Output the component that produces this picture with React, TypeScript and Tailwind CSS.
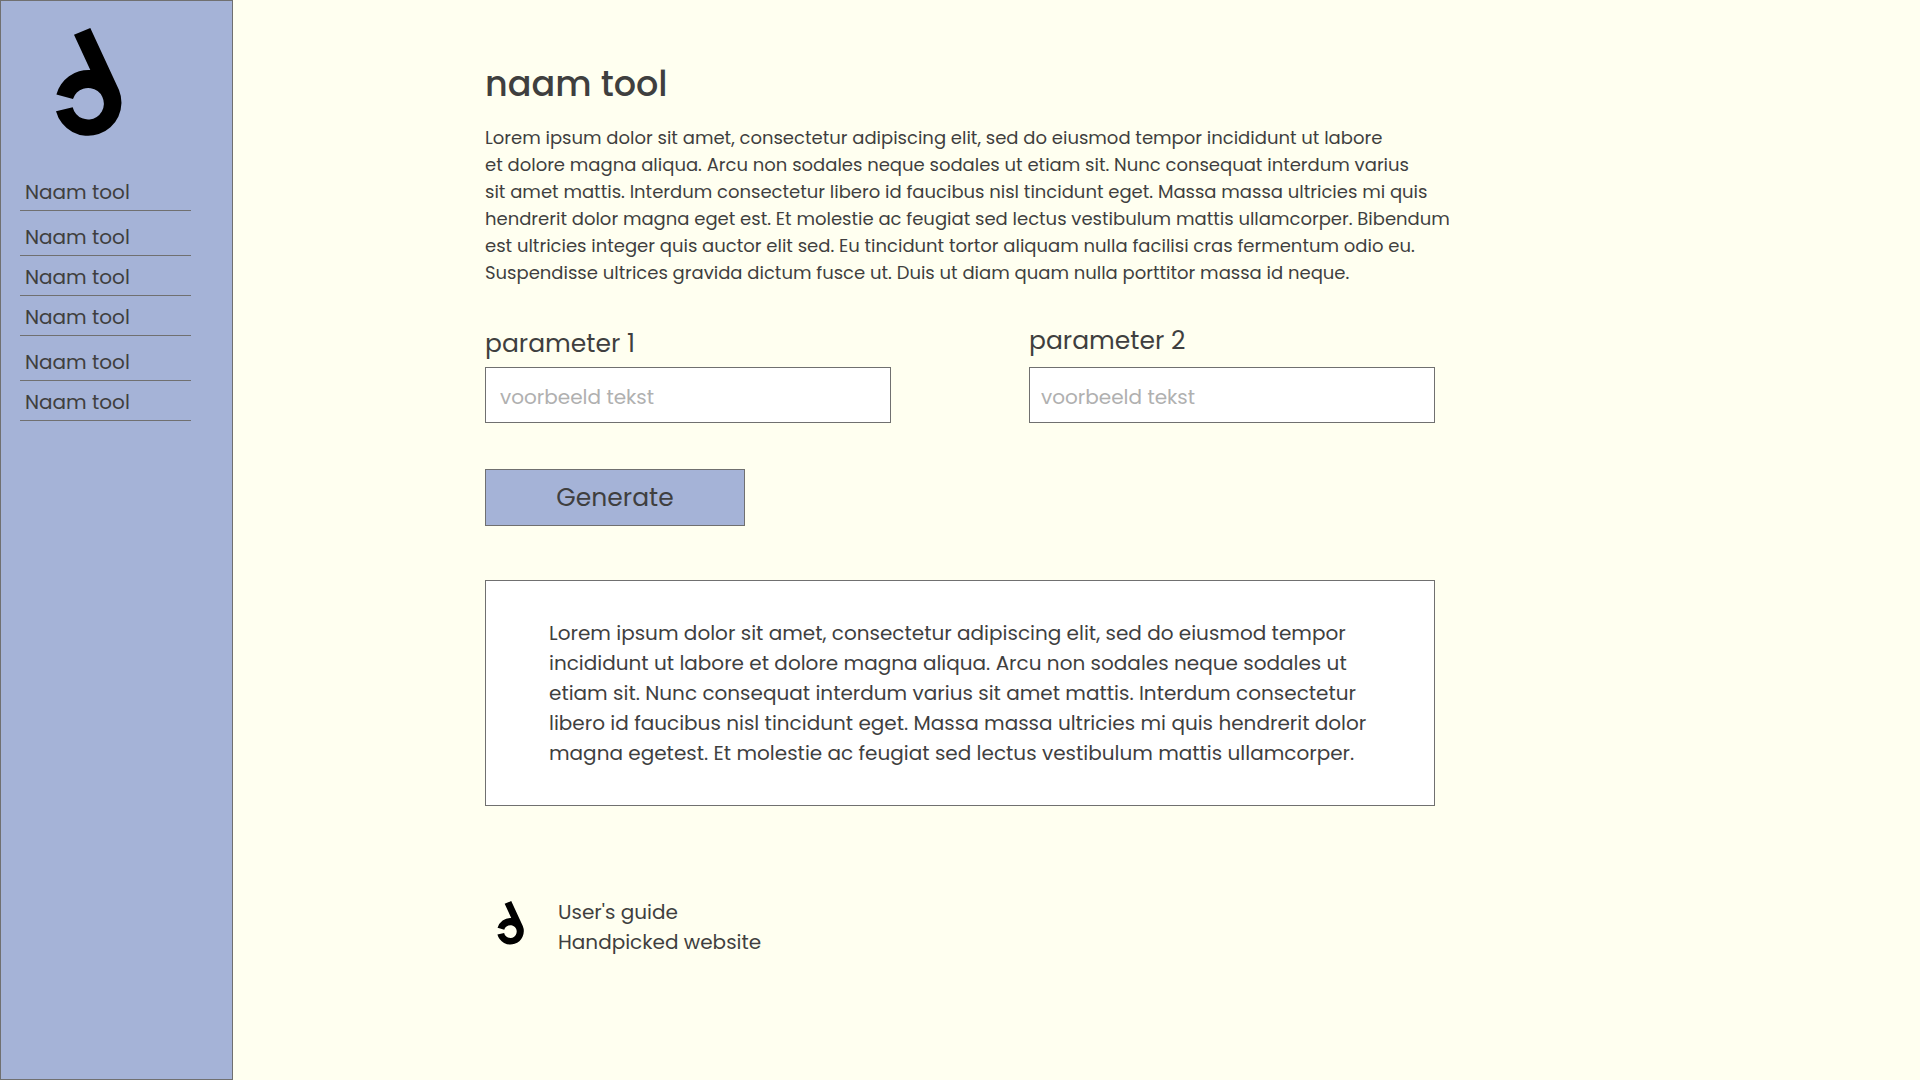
const navItems = ['Naam tool', 'Naam tool', 'Naam tool', 'Naam tool', 'Naam tool', 'Naam tool'];

const introLines = [
  'Lorem ipsum dolor sit amet, consectetur adipiscing elit, sed do eiusmod tempor incididunt ut labore',
  'et dolore magna aliqua. Arcu non sodales neque sodales ut etiam sit. Nunc consequat interdum varius',
  'sit amet mattis. Interdum consectetur libero id faucibus nisl tincidunt eget. Massa massa ultricies mi quis',
  'hendrerit dolor magna eget est. Et molestie ac feugiat sed lectus vestibulum mattis ullamcorper. Bibendum',
  'est ultricies integer quis auctor elit sed. Eu tincidunt tortor aliquam nulla facilisi cras fermentum odio eu.',
  'Suspendisse ultrices gravida dictum fusce ut. Duis ut diam quam nulla porttitor massa id neque.',
];

const resultLines = [
  'Lorem ipsum dolor sit amet, consectetur adipiscing elit, sed do eiusmod tempor',
  'incididunt ut labore et dolore magna aliqua. Arcu non sodales neque sodales ut',
  'etiam sit. Nunc consequat interdum varius sit amet mattis. Interdum consectetur',
  'libero id faucibus nisl tincidunt eget. Massa massa ultricies mi quis hendrerit dolor',
  'magna egetest. Et molestie ac feugiat sed lectus vestibulum mattis ullamcorper.',
];

function Logo({ className }: { className: string }) {
  return (
    <svg viewBox="55 28 67 109" className={className} aria-hidden="true">
      <path d="M74 34.8L90.3 28L119 90A33.3 33.3 0 1 1 56 111.2L72.7 107.3A15.8 15.8 0 1 0 73 99L56.4 94.5A33.2 33.2 0 0 1 90.3 70Z" />
    </svg>
  );
}

function Lines({ lines }: { lines: string[] }) {
  return (
    <>
      {lines.map((line) => (
        <span key={line} className="block whitespace-nowrap">
          {line}{' '}
        </span>
      ))}
    </>
  );
}

export default function App() {
  return (
    <div className="flex min-h-screen bg-[#fffff0] font-['Poppins','Inter',sans-serif] font-normal text-[#3f3f3f]">
      <aside className="w-[233px] shrink-0 border border-[#707070] bg-[#a5b3d7] pt-[27px]">
        <Logo className="ml-[54px] h-[109px] w-[67px]" />
        <nav className="ml-[19px] mt-[34px] w-[171px]">
          <ul>
            {navItems.map((item, i) => (
              <li key={i} className={i === 1 || i === 4 ? 'mt-[5px]' : ''}>
                <a href="#" className="flex h-10 items-center border-b border-[#707070] pl-[5px] pt-0.5 text-xl">
                  {item}
                </a>
              </li>
            ))}
          </ul>
        </nav>
      </aside>

      <main className="min-w-0 flex-1 pl-[252px] pr-10 pt-[57px]">
        <div className="w-full max-w-[950px]">
          <h1 className="text-[35px] font-medium leading-[54px]">naam tool</h1>
          <p className="mt-[13px] text-lg leading-[27px]">
            <Lines lines={introLines} />
          </p>

          <form onSubmit={(e) => e.preventDefault()}>
            <div className="mt-[37px] flex items-end justify-between gap-8">
              <div className="flex w-[406px] flex-col gap-[5px]">
                <label htmlFor="p1" className="text-[25px] leading-9">parameter 1</label>
                <input id="p1" type="text" placeholder="voorbeeld tekst" className="h-14 w-full border border-[#707070] bg-white pl-[14px] pt-1 text-xl outline-none placeholder:text-[#b0b0b0]" />
              </div>
              <div className="flex w-[406px] flex-col gap-2">
                <label htmlFor="p2" className="text-[25px] leading-9">parameter 2</label>
                <input id="p2" type="text" placeholder="voorbeeld tekst" className="h-14 w-full border border-[#707070] bg-white pl-[11px] pt-1 text-xl outline-none placeholder:text-[#b0b0b0]" />
              </div>
            </div>
            <button type="submit" className="mt-[46px] block h-[57px] w-[260px] border border-[#707070] bg-[#a5b3d7] text-[25px]">
              Generate
            </button>
          </form>

          <section className="mt-[54px] border border-[#707070] bg-white py-[37px] pl-[63px]">
            <p className="text-xl leading-[30px]">
              <Lines lines={resultLines} />
            </p>
          </section>

          <footer className="mt-[91px] flex items-start gap-[34px] pl-3">
            <Logo className="mt-1 h-11 w-[27px]" />
            <ul className="text-xl leading-[30px]">
              <li><a href="#">User's guide</a></li>
              <li><a href="#">Handpicked website</a></li>
            </ul>
          </footer>
        </div>
      </main>
    </div>
  );
}
